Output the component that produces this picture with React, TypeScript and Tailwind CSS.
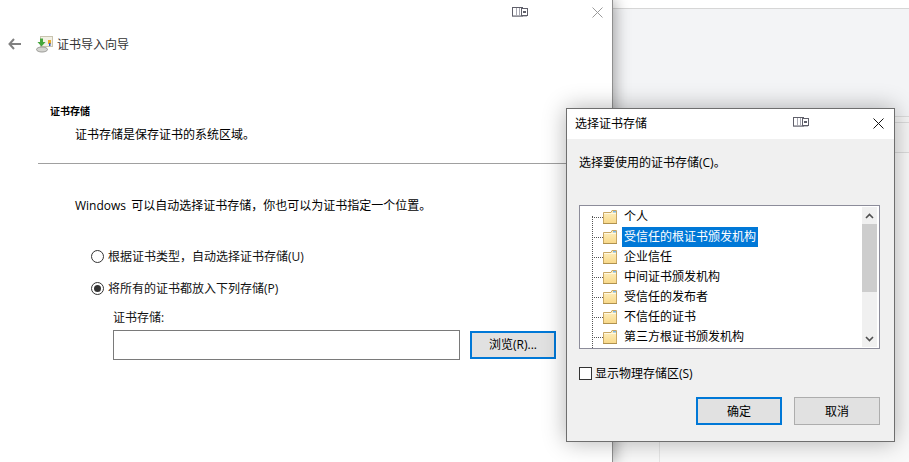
import React from 'react'

const font = { fontFamily: '"Open Sans", "Noto Sans CJK SC", sans-serif' }

function SnapIcon() {
  return (
    <svg width="16" height="10" viewBox="0 0 16 10" className="block">
      <rect x="0" y="9" width="15" height="1" fill="#c4c4c8" />
      <rect x="0.5" y="0.5" width="10" height="8.5" fill="#fff" stroke="#5f5f6a" />
      <rect x="4" y="1" width="1" height="8" fill="#a8a8b2" />
      <rect x="7" y="1" width="1" height="8" fill="#a8a8b2" />
      <rect x="9.5" y="1.5" width="6" height="7" fill="#fff" stroke="#5f5f6a" />
      <rect x="11" y="4" width="3" height="2" fill="#5f5f6a" />
    </svg>
  )
}

function CloseIcon({ color }: { color: string }) {
  return (
    <svg width="11" height="11" viewBox="0 0 11 11" className="block">
      <path d="M0.5 0.5 L10.5 10.5 M10.5 0.5 L0.5 10.5" stroke={color} strokeWidth="1" fill="none" />
    </svg>
  )
}

function FolderIcon() {
  return (
    <svg width="15" height="14" viewBox="0 0 15 14" className="block shrink-0">
      <defs>
        <linearGradient id="folderFill" x1="0" y1="0" x2="0" y2="1">
          <stop offset="0" stopColor="#fff1c4" />
          <stop offset="1" stopColor="#f8d888" />
        </linearGradient>
      </defs>
      <path d="M0.5 13.5 V2.5 H8 L9 0.5 H13.5 V13.5 Z" fill="url(#folderFill)" stroke="#c8a765" />
      <rect x="10" y="1" width="3" height="1.5" fill="#7fb7e6" />
      <rect x="1" y="3" width="12" height="1" fill="#fff8e0" />
      <rect x="0" y="13" width="14" height="1" fill="#b0924f" />
    </svg>
  )
}

function WizardIcon() {
  return (
    <svg width="17" height="17" viewBox="0 0 17 17" className="block shrink-0">
      <rect x="4.5" y="0.5" width="12" height="10" fill="#f2f0e4" stroke="#c9c4b0" />
      <rect x="12" y="4" width="3" height="4" fill="#e8a92c" />
      <rect x="13" y="7" width="1.5" height="3" fill="#3a5fc0" />
      <ellipse cx="6" cy="13.5" rx="5.5" ry="2.5" fill="#d4d4d0" stroke="#9c9c98" />
      <path d="M7 2.5 V6 H9.5 L5.5 10.5 L1.5 6 H4 V2.5 Z" fill="#45a63c" />
    </svg>
  )
}

function Radio({ checked }: { checked?: boolean }) {
  return (
    <span className="flex h-[13px] w-[13px] shrink-0 items-center justify-center rounded-full border border-[#333] bg-white">
      {checked && <span className="h-[7px] w-[7px] rounded-full bg-[#333]" />}
    </span>
  )
}

const stores = ['个人', '受信任的根证书颁发机构', '企业信任', '中间证书颁发机构', '受信任的发布者', '不信任的证书', '第三方根证书颁发机构']

function StoreDialog() {
  return (
    <div className="absolute left-[566px] top-[108px] flex h-[334px] w-[329px] flex-col border border-[#6e6e6e] bg-[#f0f0f0] shadow-[0_0_22px_rgba(0,0,0,0.3)]">
      <div className="flex h-[30px] shrink-0 items-center bg-white pl-2 text-xs text-black">
        <span>选择证书存储</span>
        <div className="mb-1 ml-[146px]"><SnapIcon /></div>
        <div className="mb-[2px] ml-[64px]"><CloseIcon color="#111" /></div>
      </div>
      <div className="flex flex-1 flex-col pl-3">
        <div className="mt-4 h-4 text-xs leading-4 text-black">选择要使用的证书存储(C)。</div>
        <div className="mt-[34px] flex h-[144px] w-[301px] border border-[#8c8c9a] bg-white">
          <div className="relative flex-1 overflow-hidden pt-[1px]">
            <div className="absolute bottom-0 left-[12px] top-[10px] border-l border-dotted border-[#555]" />
            {stores.map((name, i) => (
              <div key={name} className="flex h-5 items-center pl-[12px] text-xs text-black">
                <div className="w-[11px] border-t border-dotted border-[#555]" />
                <FolderIcon />
                {i === 1 ? (
                  <span className="ml-[4px] flex h-5 items-center bg-[#0078d7] px-[2px] text-white">{name}</span>
                ) : (
                  <span className="ml-[6px]">{name}</span>
                )}
              </div>
            ))}
          </div>
          <div className="my-[1px] mr-[2px] flex w-[15px] flex-col bg-[#f0f0f0]">
            <div className="flex h-[17px] items-center justify-center">
              <svg width="9" height="6" viewBox="0 0 9 6"><path d="M1 5 L4.5 1.5 L8 5" stroke="#505050" strokeWidth="1.6" fill="none" /></svg>
            </div>
            <div className="h-[68px] bg-[#cdcdcd]" />
            <div className="flex flex-1 items-end justify-center pb-[5px]">
              <svg width="9" height="6" viewBox="0 0 9 6"><path d="M1 1 L4.5 4.5 L8 1" stroke="#505050" strokeWidth="1.6" fill="none" /></svg>
            </div>
          </div>
        </div>
        <div className="mt-[18px] flex h-[13px] items-center text-xs text-black">
          <span className="h-[13px] w-[13px] border border-[#333] bg-white" />
          <span className="ml-[3px]">显示物理存储区(S)</span>
        </div>
        <div className="ml-[117px] mt-[17px] flex gap-3 text-xs text-black">
          <button className="h-[28px] w-[86px] border-2 border-[#0078d7] bg-[#e1e1e1] pt-[2px]">确定</button>
          <button className="h-[28px] w-[86px] border-[1px] border-[#adadad] bg-[#e1e1e1] pt-[2px]">取消</button>
        </div>
      </div>
    </div>
  )
}

export default function App() {
  return (
    <div className="relative flex h-[462px] w-[909px] overflow-hidden bg-white" style={font}>
      {/* 向导窗口 */}
      <div className="relative z-10 flex h-full w-[613px] shrink-0 flex-col border-r border-[#8f8f8f] bg-white shadow-[2px_0_14px_rgba(0,0,0,0.35)]">
        <div className="flex h-[26px] shrink-0 items-center pb-[2px]">
          <div className="ml-[512px]"><SnapIcon /></div>
          <div className="ml-[64px]"><CloseIcon color="#9a9a9a" /></div>
        </div>
        <div className="flex h-9 shrink-0 items-center pl-2">
          <svg width="13" height="12" viewBox="0 0 13 12" className="block">
            <path d="M6 1 L1.5 6 L6 11 M2 6 H13" stroke="#808080" strokeWidth="2" fill="none" />
          </svg>
          <div className="ml-[15px]"><WizardIcon /></div>
          <span className="ml-1 pt-[2px] text-xs text-[#333]">证书导入向导</span>
        </div>
        <div className="ml-[50px] mt-[41px] h-4 text-[10px] font-bold leading-4 text-black">证书存储</div>
        <div className="ml-[75px] mt-[7px] h-4 text-xs leading-[18px] text-black">证书存储是保存证书的系统区域。</div>
        <div className="ml-[38px] mt-[21px] h-px bg-[#a0a0a0]" />
        <div className="ml-[75px] mt-[33px] h-4 text-xs leading-[18px] text-black [word-spacing:2px]">Windows 可以自动选择证书存储，你也可以为证书指定一个位置。</div>
        <div className="ml-[91px] mt-[35px] flex h-4 items-center gap-[4px] text-xs text-[#111]">
          <Radio />
          <span className="pt-[2px]">根据证书类型，自动选择证书存储(U)</span>
        </div>
        <div className="ml-[91px] mt-4 flex h-4 items-center gap-[4px] text-xs text-[#111]">
          <Radio checked />
          <span className="pt-[2px]">将所有的证书都放入下列存储(P)</span>
        </div>
        <div className="ml-[113px] mt-[13px] h-4 text-xs leading-[18px] text-[#111]">证书存储:</div>
        <div className="ml-[113px] mt-[5px] flex h-[30px] items-center">
          <div className="h-[30px] w-[347px] border border-[#7a7a7a] bg-white" />
          <button className="ml-[10px] h-[28px] w-[86px] border-2 border-[#0078d7] bg-[#e1e1e1] text-xs text-black">浏览(R)...</button>
        </div>
      </div>

      {/* 后面的窗口 */}
      <div className="flex flex-1 flex-col">
        <div className="h-2 shrink-0 bg-white" />
        <div className="h-[108px] shrink-0 border-t border-[#d6d6d6] bg-[#f3f4f6]" />
        <div className="h-[6px] shrink-0 border-t border-[#dcdcdc] bg-[#f6f6f6]" />
        <div className="h-[30px] shrink-0 border-t border-[#dcdcdc] bg-[#f6f6f6]" />
        <div className="flex flex-1 border-t border-[#dcdcdc] bg-[#f9f9f9]">
          <div className="w-[47px] border-r border-[#e6e6e6]" />
        </div>
      </div>

      <div className="absolute inset-0 z-20 text-black">
        <StoreDialog />
      </div>
    </div>
  )
}
